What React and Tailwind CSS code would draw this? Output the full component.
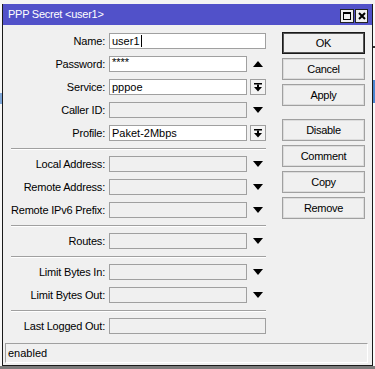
import React from "react";

const font = "font-['Liberation_Sans',Arial,sans-serif]";

function DownTri() {
  return (
    <svg width="10" height="6" viewBox="0 0 10 6">
      <polygon points="0,0 10,0 5,6" fill="#000" />
    </svg>
  );
}

function UpTri() {
  return (
    <svg width="10" height="6" viewBox="0 0 10 6">
      <polygon points="0,6 10,6 5,0" fill="#000" />
    </svg>
  );
}

function ComboButton() {
  return (
    <div className="w-[16px] h-[16px] border border-[#a0a0a0] bg-[#f4f4f4] flex items-center justify-center">
      <svg width="8" height="9" viewBox="0 0 8 9">
        <rect x="0" y="0" width="8" height="1.5" fill="#000" />
        <rect x="3" y="1.5" width="2" height="3" fill="#000" />
        <polygon points="0,4 8,4 4,8.5" fill="#000" />
      </svg>
    </div>
  );
}

function Field({ label, value, white, full, control, cursor, small }) {
  return (
    <div className="flex items-center h-[23px]">
      <div className="w-[102px] text-right text-[11px] tracking-[-0.2px] text-black whitespace-nowrap">
        {label}
      </div>
      <div
        className={`ml-[4px] h-[16px] border border-[#a0a0a0] flex items-center pl-[2px] text-[11px] text-black overflow-hidden ${
          white ? "bg-white" : "bg-[#f0f0f0]"
        } ${full ? "w-[157px]" : "w-[138px]"}`}
      >
        <span className={small ? "self-start leading-[10px]" : ""}>{value}</span>
        {cursor && <span className="ml-[1px] w-[1px] h-[12px] bg-black" />}
      </div>
      {control && (
        <div className="ml-[3px] w-[16px] flex items-center justify-center">
          {control === "down" && <DownTri />}
          {control === "up" && <UpTri />}
          {control === "combo" && <ComboButton />}
        </div>
      )}
    </div>
  );
}

function Sep() {
  return (
    <div className="h-[8px] pt-[3px]">
      <div className="ml-[8px] w-[255px] border-t border-[#a0a0a0] border-b border-b-white" />
    </div>
  );
}

function Btn({ children, main }) {
  return (
    <div
      className={`w-[83px] h-[22px] flex items-center justify-center text-[11px] tracking-[-0.3px] text-black bg-[#f0f0f0] border ${
        main
          ? "border-[#1a1a1a] shadow-[inset_0_0_0_1px_#555]"
          : "border-[#a0a0a0] shadow-[inset_0_0_0_1px_#dcdcdc]"
      }`}
    >
      {children}
    </div>
  );
}

export default function App() {
  return (
    <div className={`w-[375px] h-[369px] bg-[#f0f0f0] flex flex-col overflow-hidden ${font}`}>
      <div className="h-[4px] bg-[#f3f3f3]" />
      <div className="flex h-[362px]">
        {/* underlying app, left edge */}
        <div className="w-[2px] flex flex-col bg-[#f7f7f7]">
          <div className="h-[89px]" />
          <div className="h-[11px] bg-[#7fa7d8]" />
        </div>

        {/* window */}
        <div className="w-[371px] flex flex-col border-x border-b border-[#1a1a1a] bg-[#f0f0f0]">
          <div className="h-[21px] bg-[#5151c9] flex items-center pl-[5px] pr-[4px]">
            <span className="text-[11px] tracking-[-0.25px] text-white">PPP Secret &lt;user1&gt;</span>
            <div className="ml-auto mt-[3px] flex gap-[1px]">
              <div className="w-[14px] h-[14px] bg-[#f0f0f0] border border-[#222] flex items-center justify-center">
                <svg width="8" height="8" viewBox="0 0 8 8">
                  <rect x="0.5" y="0.5" width="7" height="7" fill="none" stroke="#000" />
                  <rect x="0" y="0" width="8" height="2" fill="#000" />
                </svg>
              </div>
              <div className="w-[13px] h-[14px] bg-[#f0f0f0] border border-[#222] flex items-center justify-center">
                <svg width="8" height="8" viewBox="0 0 8 8">
                  <path d="M1 1 L7 7 M7 1 L1 7" stroke="#000" strokeWidth="2" />
                </svg>
              </div>
            </div>
          </div>

          <div className="flex-1 flex flex-col">
            <div className="flex">
              <div className="w-[279px] pt-[4.5px] flex flex-col">
                <Field label="Name:" value="user1" white full cursor />
                <Field label="Password:" value="****" white control="up" small />
                <Field label="Service:" value="pppoe" white control="combo" />
                <Field label="Caller ID:" value="" control="down" />
                <Field label="Profile:" value="Paket-2Mbps" white control="combo" />
                <Sep />
                <Field label="Local Address:" value="" control="down" />
                <Field label="Remote Address:" value="" control="down" />
                <Field label="Remote IPv6 Prefix:" value="" control="down" />
                <Sep />
                <Field label="Routes:" value="" control="down" />
                <Sep />
                <Field label="Limit Bytes In:" value="" control="down" />
                <Field label="Limit Bytes Out:" value="" control="down" />
                <Sep />
                <Field label="Last Logged Out:" value="" full />
              </div>

              <div className="pt-[7px] flex flex-col gap-[4px]">
                <Btn main>OK</Btn>
                <Btn>Cancel</Btn>
                <Btn>Apply</Btn>
                <div className="h-[5px]" />
                <Btn>Disable</Btn>
                <Btn>Comment</Btn>
                <Btn>Copy</Btn>
                <Btn>Remove</Btn>
              </div>
            </div>

            <div className="mt-auto ml-[2px] mr-[4px] mb-[2px] h-[20px] border border-[#a0a0a0] border-r-white border-b-white flex items-center pl-[2px] text-[11px] text-black">
              enabled
            </div>
          </div>
        </div>

        {/* underlying app, right edge */}
        <div className="w-[2px] flex flex-col bg-[#fafafa]">
          <div className="h-[42px]" />
          <div className="h-[2px] bg-[#333]" />
          <div className="h-[32px]" />
          <div className="h-[23px] bg-[#4a86d0]" />
        </div>
      </div>
      <div className="flex-1 bg-[#7b7b7b]" />
    </div>
  );
}
